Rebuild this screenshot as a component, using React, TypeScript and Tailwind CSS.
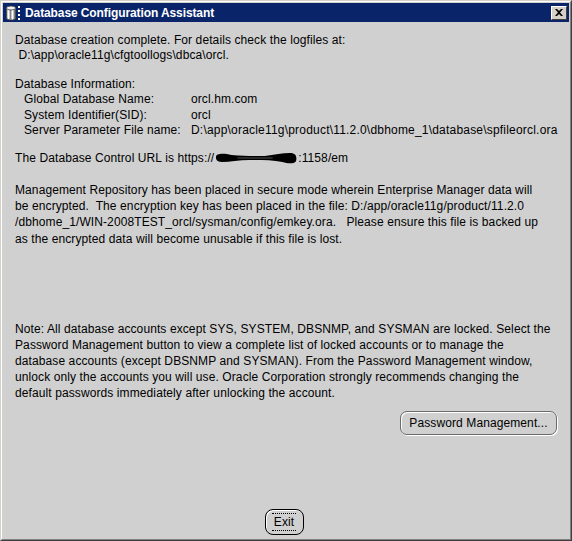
import React from "react";

const font = { fontFamily: '"Liberation Sans", Arial, sans-serif' };

function DbIcon() {
  return (
    <svg width="16" height="16" viewBox="0 0 16 16" className="shrink-0">
      <rect x="1.6" y="3" width="8.8" height="10" fill="#c8c8c8" />
      <ellipse cx="6" cy="13" rx="4.5" ry="2" fill="#c0c0c0" stroke="#404040" strokeWidth="0.8" />
      <rect x="1.6" y="3" width="8.8" height="10" fill="#c8c8c8" />
      <line x1="1.5" y1="3" x2="1.5" y2="13" stroke="#404040" strokeWidth="0.8" />
      <line x1="10.5" y1="3" x2="10.5" y2="13" stroke="#404040" strokeWidth="0.8" />
      <line x1="3.5" y1="4" x2="3.5" y2="14" stroke="#ffffff" strokeWidth="1" />
      <line x1="5.5" y1="4" x2="5.5" y2="14.5" stroke="#808080" strokeWidth="1" />
      <line x1="7.5" y1="4" x2="7.5" y2="14.5" stroke="#ffffff" strokeWidth="1" />
      <line x1="9.5" y1="4" x2="9.5" y2="14" stroke="#808080" strokeWidth="1" />
      <ellipse cx="6" cy="3" rx="4.5" ry="2" fill="#f0f0f0" stroke="#404040" strokeWidth="0.8" />
      <rect x="13" y="1" width="2" height="2" fill="#ffffff" />
      <rect x="13" y="5" width="2" height="2" fill="#ffffff" />
      <rect x="13" y="9" width="2" height="2" fill="#ffffff" />
      <rect x="13" y="13" width="2" height="2" fill="#ffffff" />
    </svg>
  );
}

function Blob() {
  return (
    <svg width="84" height="14" viewBox="0 0 86 14" className="inline-block align-[-3px]">
      <path
        d="M2 6 C2 2,10 2,18 4 C30 5,40 5,52 5 C62 4,70 2,78 2 C84 2,85 6,84 10 C83 13,76 13,70 11 C60 9,48 9,36 9 C26 9,16 11,8 11 C3 11,2 9,2 6 Z"
        fill="#000"
      />
      <path d="M24 7 L60 7" stroke="#555" strokeWidth="1" />
    </svg>
  );
}

export default function App() {
  return (
    <div className="w-[572px] h-[541px] bg-[#d0d0d0]" style={font}>
      <div className="w-full h-full border border-t-[#d4d0c8] border-l-[#d4d0c8] border-r-[#404040] border-b-[#404040]">
        <div className="w-full h-full border border-t-white border-l-white border-r-[#808080] border-b-[#808080] p-px flex flex-col">
          {/* Title bar */}
          <div className="h-[19px] bg-[#0a246a] flex items-center pl-[2px] pr-[2px] shrink-0">
            <DbIcon />
            <span className="ml-[4px] text-white font-bold text-[12px] leading-none tracking-[-0.1px]">
              Database Configuration Assistant
            </span>
            <div className="ml-auto w-[16px] h-[14px] bg-[#d4d0c8] border border-t-white border-l-white border-r-[#404040] border-b-[#404040] flex items-center justify-center">
              <svg width="8" height="7" viewBox="0 0 8 7">
                <path d="M0 0 L2 0 L4 2 L6 0 L8 0 L5 3.5 L8 7 L6 7 L4 5 L2 7 L0 7 L3 3.5 Z" fill="#000" />
              </svg>
            </div>
          </div>

          {/* Content */}
          <div className="flex-1 flex flex-col pl-[12px] pr-[12px] text-[12px] text-black tracking-[0.1px]">
            <div className="mt-[11px] leading-[15px]">
              <div>Database creation complete. For details check the logfiles at:</div>
              <div>&nbsp;D:\app\oracle11g\cfgtoollogs\dbca\orcl.</div>
            </div>

            <div className="mt-[14px] leading-[15.4px]">
              <div>Database Information:</div>
              <div className="flex pl-[9px]">
                <span className="w-[167px] shrink-0">Global Database Name:</span>
                <span>orcl.hm.com</span>
              </div>
              <div className="flex pl-[9px]">
                <span className="w-[167px] shrink-0">System Identifier(SID):</span>
                <span>orcl</span>
              </div>
              <div className="flex pl-[9px] whitespace-nowrap">
                <span className="w-[167px] shrink-0">Server Parameter File name:</span>
                <span className="tracking-[0.2px]">D:\app\oracle11g\product\11.2.0\dbhome_1\database\spfileorcl.ora</span>
              </div>
            </div>

            <div className="mt-[12px] leading-[15px] whitespace-nowrap">
              The Database Control URL is https://<Blob />:1158/em
            </div>

            <div className="mt-[16px] leading-[16.3px] whitespace-nowrap">
              <div>Management Repository has been placed in secure mode wherein Enterprise Manager data will</div>
              <div>be encrypted.&nbsp; The encryption key has been placed in the file: D:/app/oracle11g/product/11.2.0</div>
              <div>/dbhome_1/WIN-2008TEST_orcl/sysman/config/emkey.ora.&nbsp;&nbsp; Please ensure this file is backed up</div>
              <div>as the encrypted data will become unusable if this file is lost.</div>
            </div>

            <div className="mt-[74px] leading-[16px] whitespace-nowrap">
              <div>Note: All database accounts except SYS, SYSTEM, DBSNMP, and SYSMAN are locked. Select the</div>
              <div>Password Management button to view a complete list of locked accounts or to manage the</div>
              <div>database accounts (except DBSNMP and SYSMAN). From the Password Management window,</div>
              <div>unlock only the accounts you will use. Oracle Corporation strongly recommends changing the</div>
              <div>default passwords immediately after unlocking the account.</div>
            </div>

            <div className="mt-[10px] flex justify-end">
              <div className="h-[24px] w-[157px] rounded-[7px] border border-[#6a6a6a] shadow-[1px_1px_0_#ffffff,inset_1px_1px_0_#ffffff] bg-[#d0d0d0] flex items-center justify-center text-[12px]">
                Password Management...
              </div>
            </div>

            <div className="mt-auto mb-[3px] flex justify-center">
              <div className="h-[26px] w-[39px] rounded-[8px] border-[1.5px] border-black shadow-[inset_1px_1px_0_#ffffff] bg-[#d0d0d0] flex items-center justify-center ml-[-4px]">
                <span className="border-y border-dotted border-black px-[2px] leading-[16px] text-[12px]">Exit</span>
              </div>
            </div>
          </div>
        </div>
      </div>
    </div>
  );
}
